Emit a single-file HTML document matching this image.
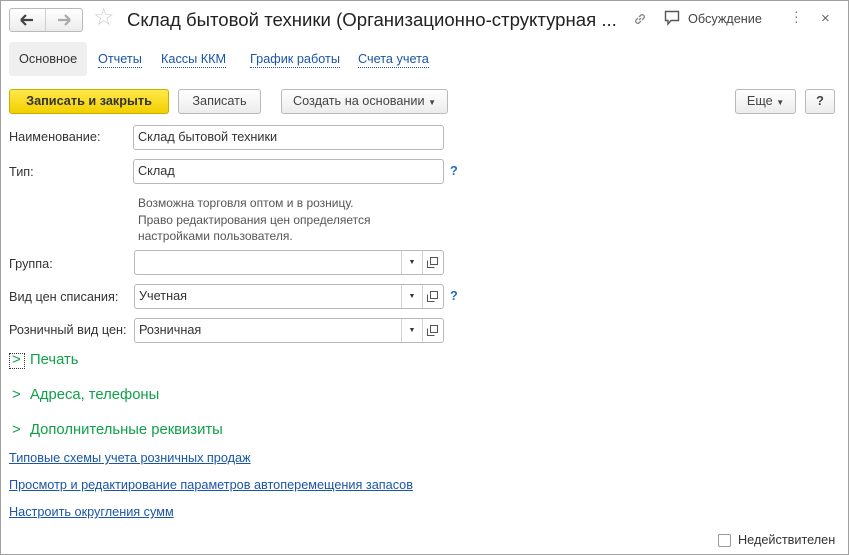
<!DOCTYPE html>
<html><head><meta charset="utf-8"><style>
*{box-sizing:border-box;margin:0;padding:0}
body{width:849px;height:555px;background:#fff;font-family:"Liberation Sans",Arial,sans-serif;font-size:12.7px;color:#333;position:relative;overflow:hidden;border:1px solid #a0a0a0}
.a{position:absolute;white-space:nowrap}
.btn{position:absolute;height:25px;border:1px solid #b9b9b9;border-radius:3px;background:linear-gradient(#fff,#ececec);text-align:center;line-height:23px;color:#444}
.lnk{color:#1a55a6;text-decoration:underline}
.tab{color:#1a55a6;border-bottom:1px dotted #1a55a6;line-height:15px}
.inp{position:absolute;height:25px;border:1px solid #b8b8b8;border-radius:3px;background:#fff;padding-left:4px;line-height:23px;color:#333}
.dd{position:absolute;top:0;width:21px;height:23px;border-left:1px solid #d0d0d0}
.q{color:#1a6fc7;font-weight:bold}
.g{color:#10a04a;font-size:14.8px}
.cp{position:absolute;top:6px;left:292px}
</style></head><body>
<div class="btn" style="left:8px;top:7px;width:74px;height:24px"></div>
<div class="a" style="left:44px;top:8px;width:1px;height:22px;background:#d0d0d0"></div>
<svg class="a" style="left:18px;top:12px" width="16" height="14"><path d="M2 7H14M2 7L7 2M2 7L7 12" stroke="#444" stroke-width="2.2" fill="none"/></svg>
<svg class="a" style="left:55px;top:12px" width="16" height="14"><path d="M14 7H2M14 7L9 2M14 7L9 12" stroke="#aaa" stroke-width="2.2" fill="none"/></svg>
<div class="a" style="left:92px;top:2px;font-size:24px;color:#ccc">&#9734;</div>
<div class="a" style="left:126px;top:8px;font-size:18.6px;color:#222">Склад бытовой техники (Организационно-структурная ...</div>
<svg class="a" style="left:631px;top:10px" width="16" height="16"><path d="M7 9L9 7M6 7L4 9a2.2 2.2 0 0 0 3 3l2-2M10 9l2-2a2.2 2.2 0 0 0-3-3L7 6" stroke="#888" stroke-width="1.3" fill="none"/></svg>
<svg class="a" style="left:663px;top:9px" width="18" height="16"><path d="M1.5 1.5H14.5V10.5H7L4 14V10.5H1.5Z" stroke="#555" stroke-width="1.4" fill="none"/></svg>
<div class="a" style="left:687px;top:11px;color:#444">Обсуждение</div>
<div class="a" style="left:793px;top:8px;color:#777;font-size:14px;line-height:5px">·<br>·<br>·</div>
<div class="a" style="left:820px;top:9px;color:#666;font-size:15px">×</div>

<div class="a" style="left:8px;top:41px;width:78px;height:34px;background:#efefef;border-radius:3px"></div>
<div class="a" style="left:18px;top:51px;color:#333">Основное</div>
<div class="a tab" style="left:97px;top:51px">Отчеты</div>
<div class="a tab" style="left:160px;top:51px">Кассы ККМ</div>
<div class="a tab" style="left:249px;top:51px">График работы</div>
<div class="a tab" style="left:357px;top:51px">Счета учета</div>

<div class="btn" style="left:8px;top:88px;width:160px;background:linear-gradient(#ffe94a,#f2cf00);border-color:#c9ad00;color:#333;font-weight:bold">Записать и закрыть</div>
<div class="btn" style="left:177px;top:88px;width:83px">Записать</div>
<div class="btn" style="left:280px;top:88px;width:167px">Создать на основании <span style="font-size:8px">&#9660;</span></div>
<div class="btn" style="left:734px;top:88px;width:61px">Еще <span style="font-size:8px">&#9660;</span></div>
<div class="btn" style="left:804px;top:88px;width:30px;font-weight:bold">?</div>

<div class="a" style="left:8px;top:129px">Наименование:</div>
<div class="inp" style="left:132px;top:124px;width:311px">Склад бытовой техники</div>
<div class="a" style="left:8px;top:164px">Тип:</div>
<div class="inp" style="left:132px;top:158px;width:311px">Склад</div>
<div class="a q" style="left:449px;top:163px">?</div>
<div class="a" style="left:137px;top:194px;color:#555;font-size:12px;line-height:16.5px">Возможна торговля оптом и в розницу.<br>Право редактирования цен определяется<br>настройками пользователя.</div>

<div class="a" style="left:8px;top:256px">Группа:</div>
<div class="inp" style="left:133px;top:249px;width:310px"><div class="dd" style="left:266px;font-size:7px;text-align:center">&#9660;</div><div class="dd" style="left:287px"></div><svg class="cp" width="11" height="11"><path d="M3.5 0.5H10.5V7.5H3.5ZM0.5 3.5V10.5H7.5" stroke="#555" fill="none"/></svg></div>
<div class="a" style="left:8px;top:289px">Вид цен списания:</div>
<div class="inp" style="left:133px;top:283px;width:310px">Учетная<div class="dd" style="left:266px;font-size:7px;text-align:center">&#9660;</div><div class="dd" style="left:287px"></div><svg class="cp" width="11" height="11"><path d="M3.5 0.5H10.5V7.5H3.5ZM0.5 3.5V10.5H7.5" stroke="#555" fill="none"/></svg></div>
<div class="a q" style="left:449px;top:288px">?</div>
<div class="a" style="left:8px;top:322px">Розничный вид цен:</div>
<div class="inp" style="left:133px;top:317px;width:310px">Розничная<div class="dd" style="left:266px;font-size:7px;text-align:center">&#9660;</div><div class="dd" style="left:287px"></div><svg class="cp" width="11" height="11"><path d="M3.5 0.5H10.5V7.5H3.5ZM0.5 3.5V10.5H7.5" stroke="#555" fill="none"/></svg></div>

<div class="a" style="left:8px;top:352px;width:16px;height:16px;border:1px dotted #333"></div>
<div class="a g" style="left:11px;top:351px">&gt;</div>
<div class="a g" style="left:29px;top:351px">Печать</div>
<div class="a g" style="left:11px;top:386px">&gt;</div>
<div class="a g" style="left:29px;top:386px">Адреса, телефоны</div>
<div class="a g" style="left:11px;top:421px">&gt;</div>
<div class="a g" style="left:29px;top:421px">Дополнительные реквизиты</div>

<div class="a lnk" style="left:8px;top:450px">Типовые схемы учета розничных продаж</div>
<div class="a lnk" style="left:8px;top:477px">Просмотр и редактирование параметров автоперемещения запасов</div>
<div class="a lnk" style="left:8px;top:504px">Настроить округления сумм</div>

<div class="a" style="left:717px;top:533px;width:13px;height:13px;border:1px solid #999;border-radius:2px"></div>
<div class="a" style="left:737px;top:532px">Недействителен</div>
</body></html>
